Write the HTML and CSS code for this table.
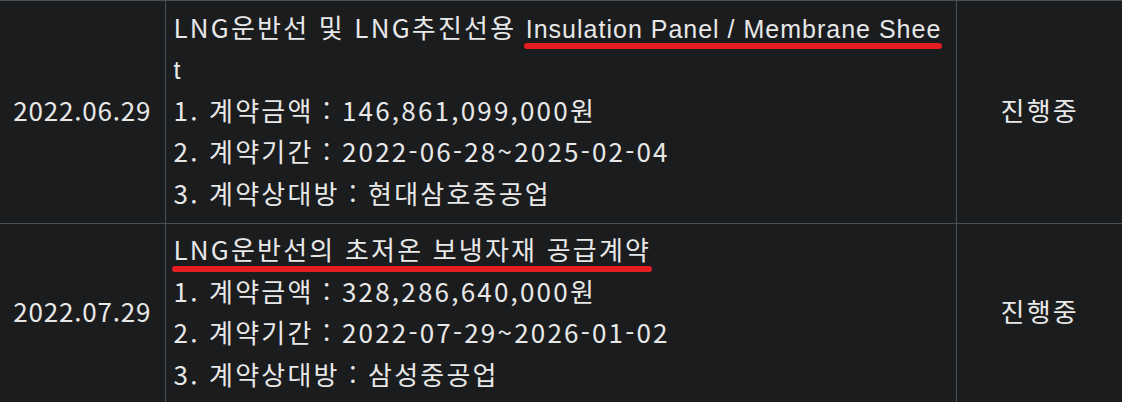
FILE: index.html
```html
<!DOCTYPE html>
<html lang="ko">
<head>
<meta charset="utf-8">
<link rel="stylesheet" href="styles.css">
</head>
<body>
<table class="contracts">
  <colgroup>
    <col class="c-date">
    <col class="c-desc">
    <col class="c-state">
  </colgroup>
  <tbody>
    <tr>
      <td class="date">2022.06.29</td>
      <td class="desc">LNG운반선 및 LNG추진선용 <span class="mark en">Insulation Panel / Membrane Shee</span><span class="en">t</span><br>1. 계약금액 : 146,861,099,000원<br>2. 계약기간 : 2022-06-28~2025-02-04<br>3. 계약상대방 : 현대삼호중공업</td>
      <td class="state">진행중</td>
    </tr>
    <tr>
      <td class="date">2022.07.29</td>
      <td class="desc"><span class="mark">LNG운반선의 초저온 보냉자재 공급계약</span><br>1. 계약금액 : 328,286,640,000원<br>2. 계약기간 : 2022-07-29~2026-01-02<br>3. 계약상대방 : 삼성중공업</td>
      <td class="state">진행중</td>
    </tr>
  </tbody>
</table>
</body>
</html>
```
FILE: styles.css
```css
html, body {
  margin: 0;
  padding: 0;
  background: #1b1c1e;
}
body {
  width: 1122px;
  height: 402px;
  overflow: hidden;
}
.contracts {
  width: 1123px;
  border-collapse: collapse;
  table-layout: fixed;
  font-family: "Noto Sans CJK KR", sans-serif;
  font-size: 26px;
  letter-spacing: 2.2px;
  line-height: 41.5px;
  color: #e8e8e8;
}
.c-date { width: 165px; }
.c-desc { width: 791px; }
.c-state { width: 167px; }
.contracts td {
  border-top: 1px solid #4b4f53;
  border-bottom: 1px solid #4b4f53;
  border-left: 1px solid #4b4f53;
  padding: 4.5px 12px 9.5px 8px;
  vertical-align: middle;
}
.contracts td.date {
  border-left: none;
  text-align: center;
  padding-left: 0;
  padding-right: 0;
  letter-spacing: 0.8px;
}
.contracts td.state {
  text-align: center;
  padding-left: 0;
  padding-right: 0;
}
.desc {
  word-break: break-all;
}
.en {
  font-family: "Liberation Sans", sans-serif;
  font-size: 25px;
  letter-spacing: 1px;
  line-height: 1;
}
.mark {
  position: relative;
}
.mark::after {
  content: "";
  position: absolute;
  left: -2px;
  right: -1px;
  top: calc(100% - 1px);
  height: 6px;
  border-radius: 3px;
  background: #e31d20;
}
.mark.en::after {
  top: calc(100% + 0.5px);
}
```
